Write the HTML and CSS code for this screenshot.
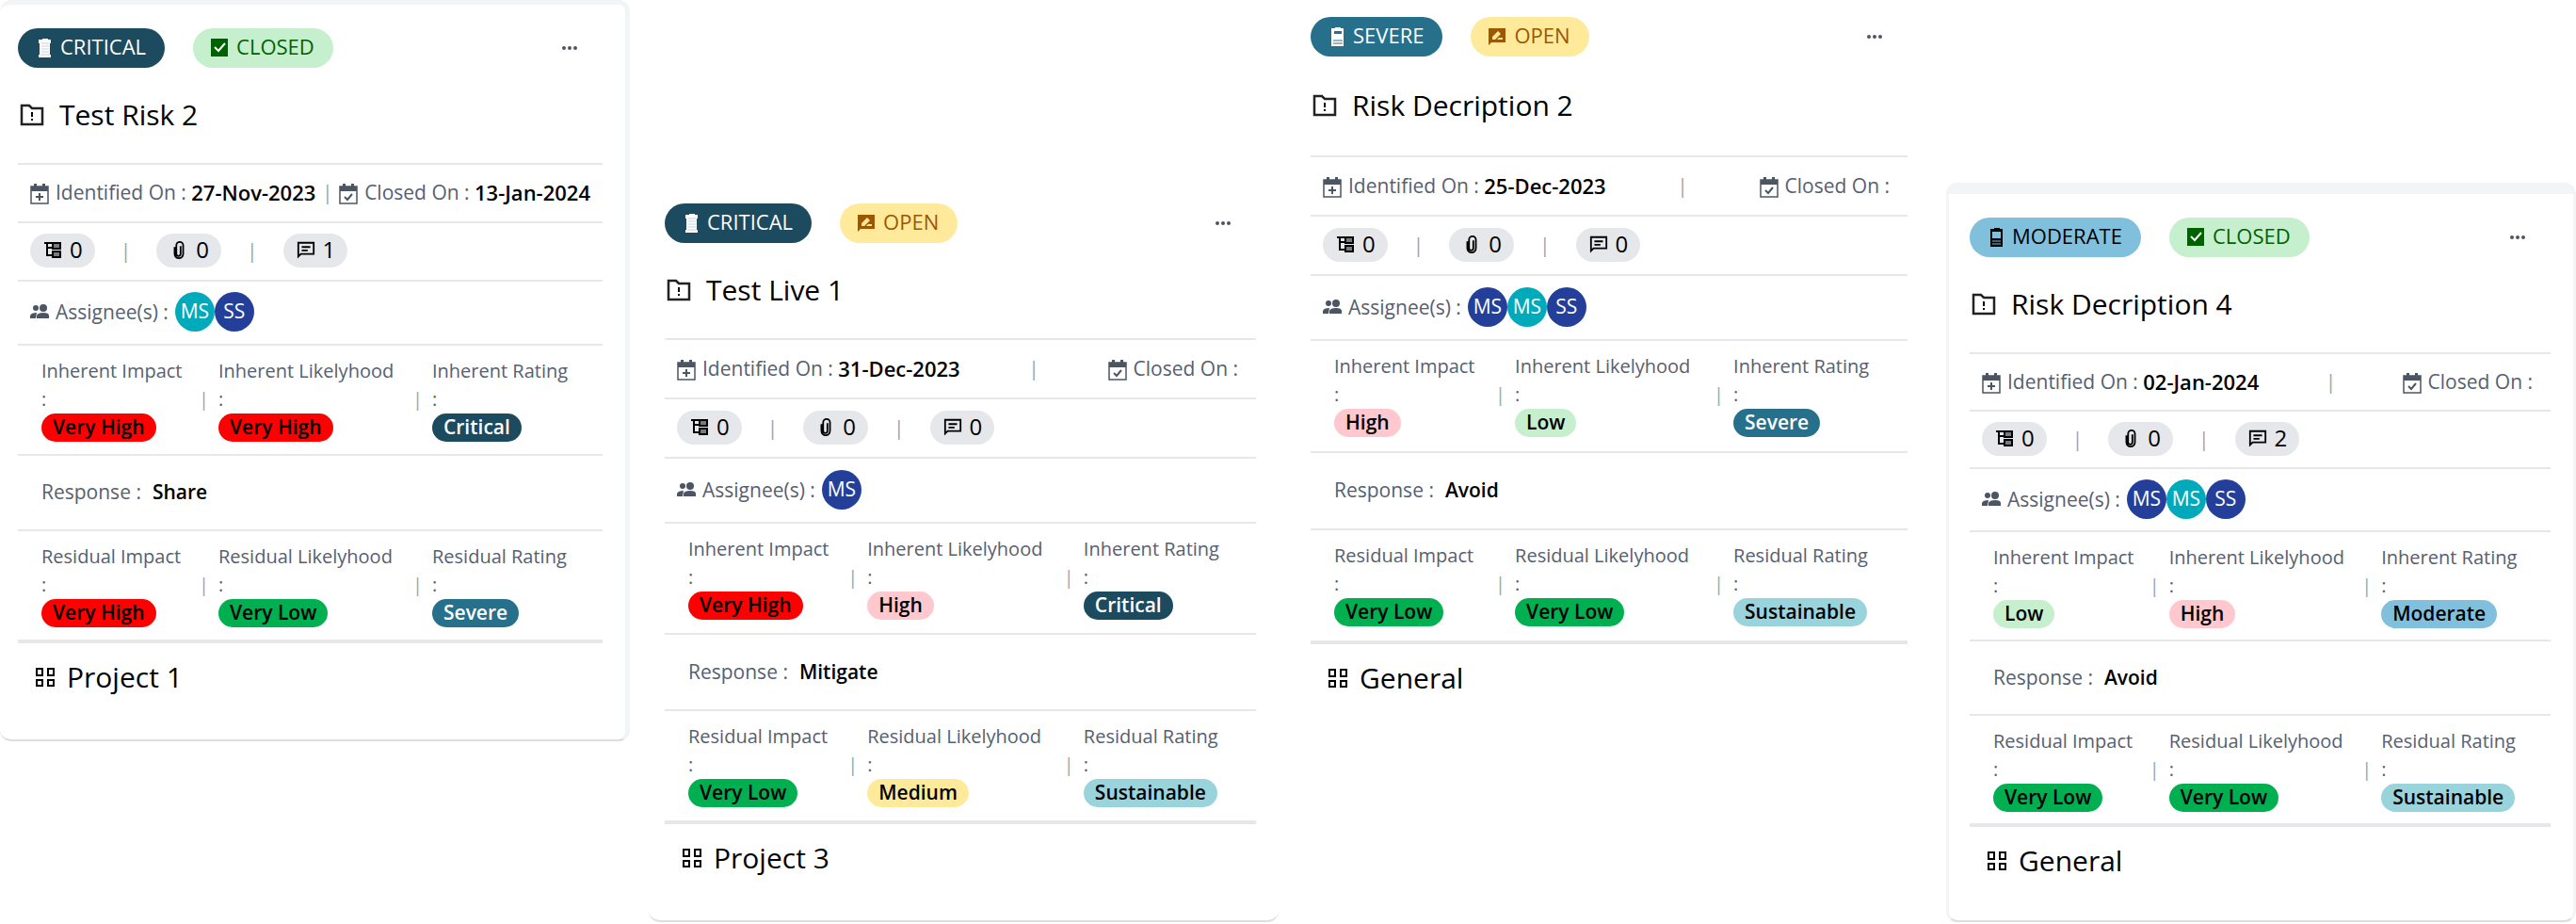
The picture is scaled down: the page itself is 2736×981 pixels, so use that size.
FILE: index.html
```html
<!DOCTYPE html>
<html lang="en">
<head>
    <meta charset="UTF-8">
    <meta name="viewport" content="width=device-width, initial-scale=1.0">
    <title>Risks</title>
    <link rel="stylesheet" href="styles.css">
</head>
<body>
    <!-- shared icons -->
    <svg class="sprite" xmlns="http://www.w3.org/2000/svg">
        <symbol id="battery-full" viewBox="0 0 14 20"><path d="M4 0h6v1h3v4h-1v12h1v3H0v-3h1V5H0V1h4z"/><path d="M3 5h8M3 8h8M3 11h8M3 14h8M2 17h10" stroke="#1c4a5e" stroke-opacity=".25" stroke-width="1"/></symbol>
        <symbol id="battery-high" viewBox="0 0 14 20"><path fill-rule="evenodd" d="M4 0h6v1h3v19H0V1h4zM3 4v3h8V4z"/><path d="M2 14h10M2 17h10" stroke="#26708c" stroke-width="1"/></symbol>
        <symbol id="battery-half" viewBox="0 0 14 20"><path fill-rule="evenodd" d="M4 0h6v1h3v19H0V1h4zM2 4v7h9V4z"/><path d="M2 14h9M2 17h9" stroke="#80c0dc" stroke-width="1"/></symbol>
        <symbol id="check-box" viewBox="0 0 20 20"><path d="M1 0h18v19H1z"/><path d="M5 9l4 4 7-8" fill="none" stroke="#fff" stroke-width="2"/></symbol>
        <symbol id="review" viewBox="0 0 20 20"><path d="M1 1h18v15H4l-3 3z"/><path d="M5 13v-3l6-6 3 3-6 6zM10 13l2-2h4v2z" fill="#ffea9c"/></symbol>
        <symbol id="folder" viewBox="0 0 26 24"><path d="M2 2h8l3 3h11v17H2z" fill="none" stroke="#222" stroke-width="2.5"/><path d="M12 9h2v5h-2zM12 16h2v2h-2z"/></symbol>
        <symbol id="calendar-plus" viewBox="0 0 20 22"><path d="M1 3h18v18H1z" fill="none" stroke="currentColor" stroke-width="1.5"/><path d="M1 3h18v5H1zM4 0h3v4H4zM13 0h3v4h-3zM9 10h2v3h3v2h-3v3H9v-3H6v-2h3z"/></symbol>
        <symbol id="calendar-check" viewBox="0 0 20 22"><path d="M1 3h18v18H1z" fill="none" stroke="currentColor" stroke-width="1.5"/><path d="M1 3h18v5H1zM4 0h3v4H4zM13 0h3v4h-3z"/><path d="M6 14l3 3 5-6" fill="none" stroke="currentColor" stroke-width="2"/></symbol>
        <symbol id="tree" viewBox="0 0 20 20"><path d="M1 3h8M4 3v13h6M4 8h6" fill="none" stroke="currentColor" stroke-width="2"/><path d="M10 3h8v6h-8zM10 12h8v6h-8z" fill="#777a7f" stroke="currentColor" stroke-width="2"/></symbol>
        <symbol id="clip" viewBox="0 0 14 22"><path d="M2 8v8a5 5 0 0 0 10 0V6a4 4 0 0 0-8 0v10a2 2 0 0 0 5 0V7" fill="none" stroke="currentColor" stroke-width="2"/></symbol>
        <symbol id="comment" viewBox="0 0 22 20"><path d="M2 2h18v13H5l-3 3z" fill="none" stroke="currentColor" stroke-width="2"/><path d="M6 6h10v2H6zM6 10h7v2H6z"/></symbol>
        <symbol id="people" viewBox="0 0 20 16"><circle cx="6" cy="4" r="3"/><circle cx="14" cy="4" r="4"/><path d="M0 15v-3q1-3 7-3l-1 6zM7 15v-3q1-3 7-3t6 3v3z"/></symbol>
        <symbol id="grid" viewBox="0 0 22 22"><path d="M2 2h6v7H2zM14 2h6v7h-6zM2 14h6v6H2zM14 14h6v6h-6z" fill="none" stroke="currentColor" stroke-width="2"/></symbol>
        <symbol id="more" viewBox="0 0 18 6"><circle cx="3" cy="3" r="2"/><circle cx="9" cy="3" r="2"/><circle cx="15" cy="3" r="2"/></symbol>
    </svg>

    <main class="board">
        <article class="card card-one">
            <header class="card-head">
                <span class="badge critical"><svg class="battery"><use href="#battery-full"/></svg>CRITICAL</span>
                <span class="badge closed"><svg class="state"><use href="#check-box"/></svg>CLOSED</span>
                <button class="menu" type="button" aria-label="More"><svg><use href="#more"/></svg></button>
            </header>
            <h2 class="title"><svg><use href="#folder"/></svg>Test Risk 2</h2>
            <div class="row dates">
                <span class="field"><svg class="cal"><use href="#calendar-plus"/></svg>Identified On : <b>27-Nov-2023</b></span>
                <span class="bar">|</span>
                <span class="field"><svg class="cal"><use href="#calendar-check"/></svg>Closed On : <b>13-Jan-2024</b></span>
            </div>
            <div class="row counts">
                <span class="count"><svg><use href="#tree"/></svg>0</span><span class="bar">|</span>
                <span class="count"><svg><use href="#clip"/></svg>0</span><span class="bar">|</span>
                <span class="count"><svg><use href="#comment"/></svg>1</span>
            </div>
            <div class="row assignees">
                <span class="field"><svg class="people"><use href="#people"/></svg>Assignee(s) :</span>
                <span class="avatar teal">MS</span><span class="avatar navy">SS</span>
            </div>
            <div class="row metrics">
                <div class="metric"><span>Inherent Impact</span><span class="colon">:</span><span class="pill very-high">Very High</span></div>
                <div class="metric"><span>Inherent Likelyhood</span><span class="colon">:</span><span class="pill very-high">Very High</span></div>
                <div class="metric"><span>Inherent Rating</span><span class="colon">:</span><span class="pill critical">Critical</span></div>
            </div>
            <div class="row response">Response : <b>Share</b></div>
            <div class="row metrics">
                <div class="metric"><span>Residual Impact</span><span class="colon">:</span><span class="pill very-high">Very High</span></div>
                <div class="metric"><span>Residual Likelyhood</span><span class="colon">:</span><span class="pill very-low">Very Low</span></div>
                <div class="metric"><span>Residual Rating</span><span class="colon">:</span><span class="pill severe">Severe</span></div>
            </div>
            <footer class="project"><svg><use href="#grid"/></svg>Project 1</footer>
        </article>

        <article class="card card-two">
            <header class="card-head">
                <span class="badge critical"><svg class="battery"><use href="#battery-full"/></svg>CRITICAL</span>
                <span class="badge open"><svg class="state"><use href="#review"/></svg>OPEN</span>
                <button class="menu" type="button" aria-label="More"><svg><use href="#more"/></svg></button>
            </header>
            <h2 class="title"><svg><use href="#folder"/></svg>Test Live 1</h2>
            <div class="row dates">
                <span class="field"><svg class="cal"><use href="#calendar-plus"/></svg>Identified On : <b>31-Dec-2023</b></span>
                <span class="bar">|</span>
                <span class="field empty"><svg class="cal"><use href="#calendar-check"/></svg>Closed On :</span>
            </div>
            <div class="row counts">
                <span class="count"><svg><use href="#tree"/></svg>0</span><span class="bar">|</span>
                <span class="count"><svg><use href="#clip"/></svg>0</span><span class="bar">|</span>
                <span class="count"><svg><use href="#comment"/></svg>0</span>
            </div>
            <div class="row assignees">
                <span class="field"><svg class="people"><use href="#people"/></svg>Assignee(s) :</span>
                <span class="avatar navy">MS</span>
            </div>
            <div class="row metrics">
                <div class="metric"><span>Inherent Impact</span><span class="colon">:</span><span class="pill very-high">Very High</span></div>
                <div class="metric"><span>Inherent Likelyhood</span><span class="colon">:</span><span class="pill high">High</span></div>
                <div class="metric"><span>Inherent Rating</span><span class="colon">:</span><span class="pill critical">Critical</span></div>
            </div>
            <div class="row response">Response : <b>Mitigate</b></div>
            <div class="row metrics">
                <div class="metric"><span>Residual Impact</span><span class="colon">:</span><span class="pill very-low">Very Low</span></div>
                <div class="metric"><span>Residual Likelyhood</span><span class="colon">:</span><span class="pill medium">Medium</span></div>
                <div class="metric"><span>Residual Rating</span><span class="colon">:</span><span class="pill sustainable">Sustainable</span></div>
            </div>
            <footer class="project"><svg><use href="#grid"/></svg>Project 3</footer>
        </article>

        <article class="card card-three">
            <header class="card-head">
                <span class="badge severe"><svg class="battery"><use href="#battery-high"/></svg>SEVERE</span>
                <span class="badge open"><svg class="state"><use href="#review"/></svg>OPEN</span>
                <button class="menu" type="button" aria-label="More"><svg><use href="#more"/></svg></button>
            </header>
            <h2 class="title"><svg><use href="#folder"/></svg>Risk Decription 2</h2>
            <div class="row dates">
                <span class="field"><svg class="cal"><use href="#calendar-plus"/></svg>Identified On : <b>25-Dec-2023</b></span>
                <span class="bar">|</span>
                <span class="field empty"><svg class="cal"><use href="#calendar-check"/></svg>Closed On :</span>
            </div>
            <div class="row counts">
                <span class="count"><svg><use href="#tree"/></svg>0</span><span class="bar">|</span>
                <span class="count"><svg><use href="#clip"/></svg>0</span><span class="bar">|</span>
                <span class="count"><svg><use href="#comment"/></svg>0</span>
            </div>
            <div class="row assignees">
                <span class="field"><svg class="people"><use href="#people"/></svg>Assignee(s) :</span>
                <span class="avatar navy">MS</span><span class="avatar teal">MS</span><span class="avatar navy">SS</span>
            </div>
            <div class="row metrics">
                <div class="metric"><span>Inherent Impact</span><span class="colon">:</span><span class="pill high">High</span></div>
                <div class="metric"><span>Inherent Likelyhood</span><span class="colon">:</span><span class="pill low">Low</span></div>
                <div class="metric"><span>Inherent Rating</span><span class="colon">:</span><span class="pill severe">Severe</span></div>
            </div>
            <div class="row response">Response : <b>Avoid</b></div>
            <div class="row metrics">
                <div class="metric"><span>Residual Impact</span><span class="colon">:</span><span class="pill very-low">Very Low</span></div>
                <div class="metric"><span>Residual Likelyhood</span><span class="colon">:</span><span class="pill very-low">Very Low</span></div>
                <div class="metric"><span>Residual Rating</span><span class="colon">:</span><span class="pill sustainable">Sustainable</span></div>
            </div>
            <footer class="project"><svg><use href="#grid"/></svg>General</footer>
        </article>

        <article class="card card-four">
            <header class="card-head">
                <span class="badge moderate"><svg class="battery"><use href="#battery-half"/></svg>MODERATE</span>
                <span class="badge closed"><svg class="state"><use href="#check-box"/></svg>CLOSED</span>
                <button class="menu" type="button" aria-label="More"><svg><use href="#more"/></svg></button>
            </header>
            <h2 class="title"><svg><use href="#folder"/></svg>Risk Decription 4</h2>
            <div class="row dates">
                <span class="field"><svg class="cal"><use href="#calendar-plus"/></svg>Identified On : <b>02-Jan-2024</b></span>
                <span class="bar">|</span>
                <span class="field empty"><svg class="cal"><use href="#calendar-check"/></svg>Closed On :</span>
            </div>
            <div class="row counts">
                <span class="count"><svg><use href="#tree"/></svg>0</span><span class="bar">|</span>
                <span class="count"><svg><use href="#clip"/></svg>0</span><span class="bar">|</span>
                <span class="count"><svg><use href="#comment"/></svg>2</span>
            </div>
            <div class="row assignees">
                <span class="field"><svg class="people"><use href="#people"/></svg>Assignee(s) :</span>
                <span class="avatar navy">MS</span><span class="avatar teal">MS</span><span class="avatar navy">SS</span>
            </div>
            <div class="row metrics">
                <div class="metric"><span>Inherent Impact</span><span class="colon">:</span><span class="pill low">Low</span></div>
                <div class="metric"><span>Inherent Likelyhood</span><span class="colon">:</span><span class="pill high">High</span></div>
                <div class="metric"><span>Inherent Rating</span><span class="colon">:</span><span class="pill moderate">Moderate</span></div>
            </div>
            <div class="row response">Response : <b>Avoid</b></div>
            <div class="row metrics">
                <div class="metric"><span>Residual Impact</span><span class="colon">:</span><span class="pill very-low">Very Low</span></div>
                <div class="metric"><span>Residual Likelyhood</span><span class="colon">:</span><span class="pill very-low">Very Low</span></div>
                <div class="metric"><span>Residual Rating</span><span class="colon">:</span><span class="pill sustainable">Sustainable</span></div>
            </div>
            <footer class="project"><svg><use href="#grid"/></svg>General</footer>
        </article>
    </main>
</body>
</html>
```
FILE: styles.css
```css
* {
    margin: 0;
    padding: 0;
    box-sizing: border-box;
}

body {
    background-color: #fff;
    color: #566070;
    font-family: "Open Sans", "Noto Sans", sans-serif;
    font-size: 20px;
    line-height: 30px;
}

svg {
    fill: currentColor;
    flex: none;
}

b {
    color: #000;
    font-weight: 600;
}

.sprite {
    display: none;
}

.board {
    display: grid;
    grid-template-columns: repeat(4, 1fr);
    gap: 20px;
    align-items: start;
}

.card {
    --title: 101px;
    --row: 62px;
    --people: 68px;
    --metric: 117px;
    --response: 80px;
    border: 0 solid #f3f4f6;
    border-radius: 12px;
}

.card-one {
    border-width: 5px 5px 2px 0;
    border-bottom-color: #dcdee0;
    padding: 25px 24px 28px 19px;
}

.card-two {
    --row: 63px;
    --people: 69px;
    --metric: 118px;
    --response: 81px;
    margin-top: 190px;
    border-bottom: 2px solid #dcdee0;
    padding: 26px 24px 28px 17px;
}

.card-three {
    --title: 105px;
    --row: 63px;
    --people: 69px;
    --metric: 119px;
    --response: 82px;
    padding: 18px 21px 28px 14px;
}

.card-four {
    --row: 61px;
    --people: 67px;
    --metric: 116px;
    --response: 79px;
    margin-top: 194px;
    border-width: 12px 3px 2px 3px;
    border-bottom-color: #dcdee0;
    padding: 25px 24px 25px 22px;
}

/* header */
.card-head {
    display: flex;
    align-items: center;
}

.badge {
    display: flex;
    align-items: center;
    height: 42px;
    margin-right: 30px;
    border-radius: 21px;
    padding: 0 20px 4px 22px;
    font-size: 22px;
}

.badge svg {
    height: 20px;
    margin-top: 4px;
}

.battery {
    width: 14px;
    margin-right: 9px;
}

.state {
    width: 20px;
    margin-left: -4px;
    margin-right: 8px;
}

.critical {
    background-color: #1c4a5e;
    color: #fff;
}

.severe {
    background-color: #26708c;
    color: #fff;
}

.moderate {
    background-color: #80c0dc;
    color: #000;
}

.sustainable {
    background-color: #99d3dc;
    color: #000;
}

.closed {
    background-color: #c6efce;
    color: #006100;
}

.open {
    background-color: #ffea9c;
    color: #9c5700;
}

.menu {
    margin-left: auto;
    margin-right: 26px;
    border: none;
    background: none;
    color: #4b5563;
    line-height: 0;
    cursor: pointer;
}

.menu svg {
    width: 18px;
    height: 6px;
}

.title {
    display: flex;
    align-items: center;
    gap: 16px;
    height: var(--title);
    padding: 0 0 2px 2px;
    color: #000;
    font-size: 30px;
    font-weight: 400;
}

.title svg {
    width: 26px;
    height: 24px;
}

/* rows */
.row {
    display: flex;
    align-items: center;
    height: var(--row);
    border-top: 2px solid #e5e7eb;
    padding: 0 13px 2px;
    font-size: 21px;
}

.field {
    display: flex;
    align-items: center;
    white-space: pre;
}

.field svg {
    width: 20px;
    margin-right: 7px;
    color: #4b5563;
}

.cal {
    height: 22px;
    margin-top: 4px;
}

.people {
    height: 16px;
}

.dates {
    justify-content: space-between;
}

.dates b {
    font-size: 22px;
}

.bar {
    color: #9ca3af;
}

.empty {
    padding-right: 6px;
}

.counts {
    gap: 27px;
}

.count {
    display: flex;
    align-items: center;
    gap: 8px;
    height: 36px;
    border-radius: 18px;
    background-color: #e5e7eb;
    color: #000;
    padding: 0 13px 2px 14px;
    font-size: 24px;
    font-weight: 500;
}

.count svg {
    width: 20px;
    height: 20px;
}

.assignees {
    height: var(--people);
}

.assignees .field {
    margin-right: 7px;
}

.avatar {
    width: 42px;
    height: 42px;
    border-radius: 50%;
    color: #fff;
    line-height: 40px;
    text-align: center;
}

.teal {
    background-color: #00aabb;
}

.navy {
    background-color: #233f99;
}

.metrics {
    display: grid;
    grid-template-columns: 188fr 227fr 181fr;
    align-items: start;
    height: var(--metric);
    padding: 12px 0 0 25px;
    font-size: 20px;
}

.metric {
    display: flex;
    flex-direction: column;
    align-items: flex-start;
    white-space: nowrap;
}

.colon {
    display: flex;
    justify-content: space-between;
    align-self: stretch;
    margin-right: 10px;
}

/* separator between the metric columns */
.metric:not(:last-child) .colon::after {
    content: "|";
    color: #9ca3af;
}

.pill {
    height: 30px;
    border-radius: 15px;
    padding: 0 12px;
    font-size: 21px;
    font-weight: 600;
    line-height: 28px;
}

.very-high {
    background-color: #ff0000;
    color: #000;
}

.high {
    background-color: #ffc7ce;
    color: #000;
}

.medium {
    background-color: #ffea9c;
    color: #000;
}

.low {
    background-color: #c6efce;
    color: #000;
}

.very-low {
    background-color: #00b050;
    color: #000;
}

.response {
    gap: 12px;
    height: var(--response);
    padding-left: 25px;
}

.project {
    display: flex;
    align-items: center;
    gap: 12px;
    height: 78px;
    border-top: 4px solid #e5e7eb;
    padding: 0 0 2px 18px;
    color: #000;
    font-size: 30px;
}

.project svg {
    width: 22px;
    height: 22px;
}
```
